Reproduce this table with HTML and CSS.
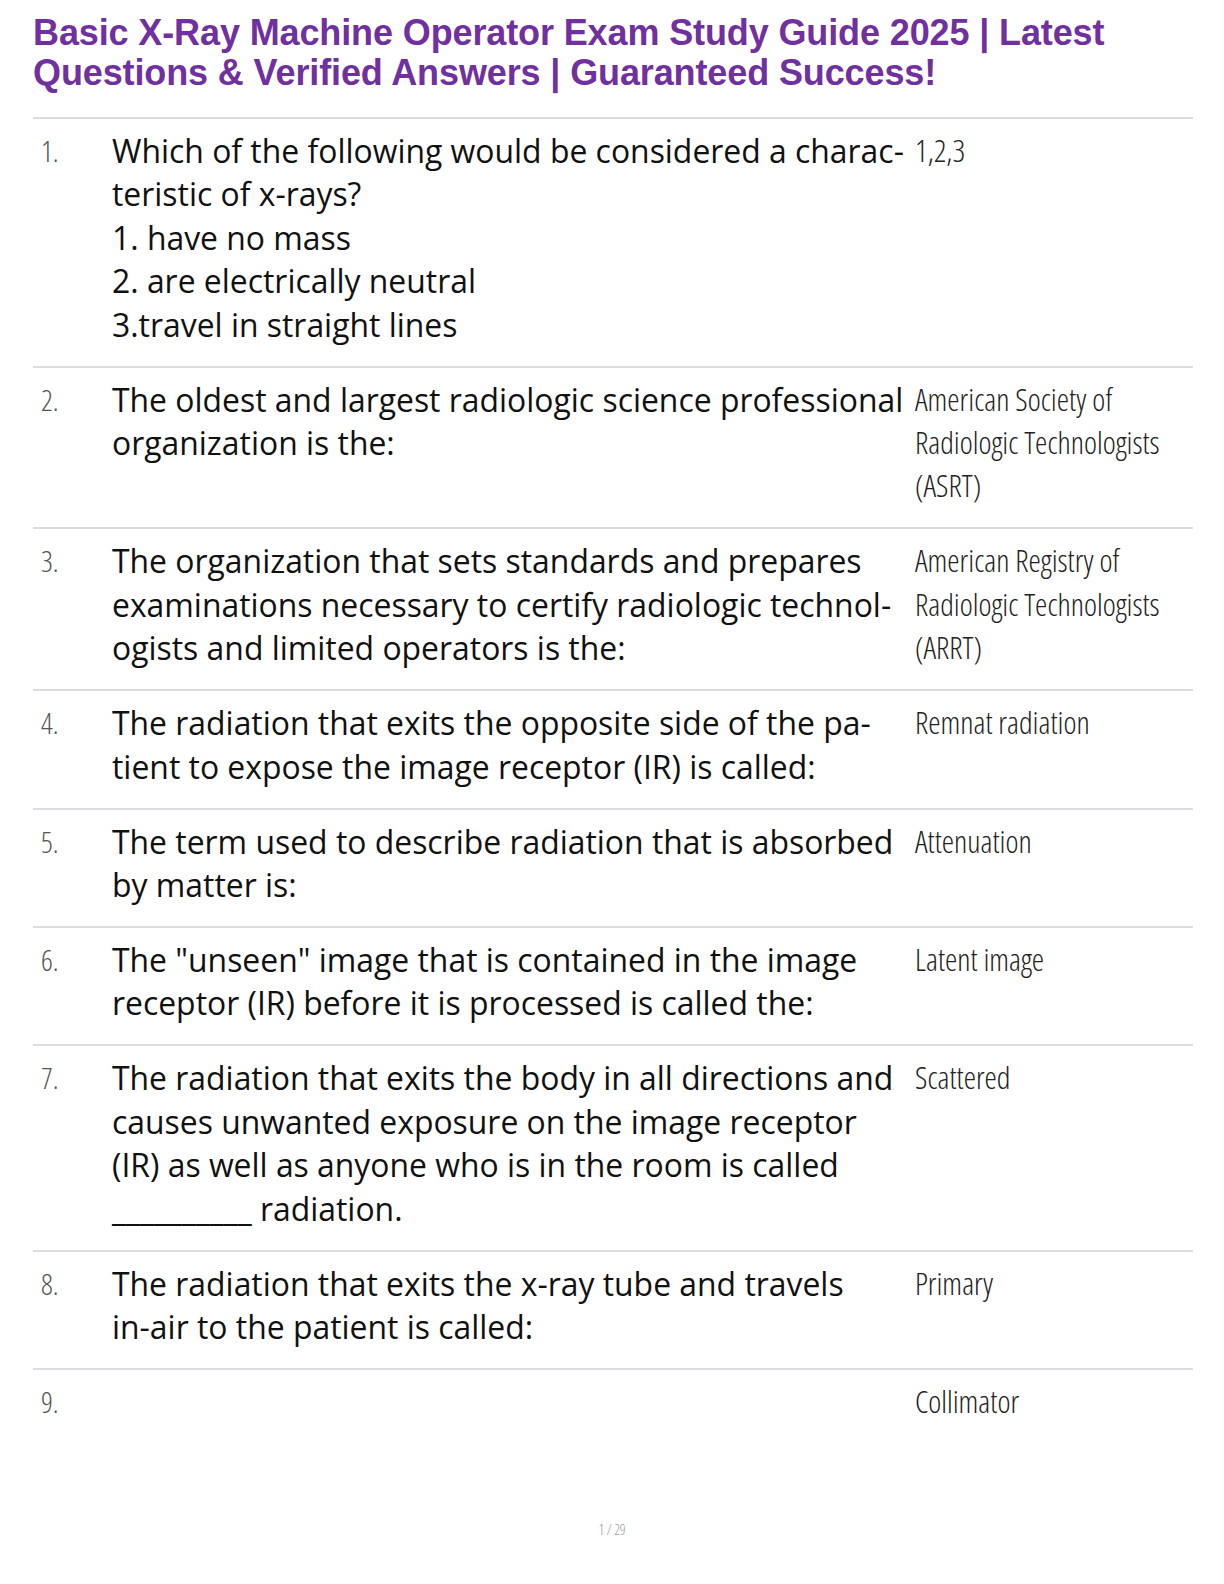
FILE: index.html
```html
<!DOCTYPE html>
<html>
<head>
<meta charset="utf-8">
<link rel="stylesheet" href="styles.css">
</head>
<body>
<div class="page">
  <h1 class="title">Basic X-Ray Machine Operator Exam Study Guide 2025 | Latest Questions &amp; Verified Answers | Guaranteed Success!</h1>
  <div class="list">
    <div class="row">
      <div class="num">1.</div>
      <div class="q">Which of the following would be considered a charac&shy;teristic of <span class="nw">x-rays?</span><br>1. have no mass<br>2. are electrically neutral<br>3.travel in straight lines</div>
      <div class="a">1,2,3</div>
    </div>
    <div class="row">
      <div class="num">2.</div>
      <div class="q">The oldest and largest radiologic science professional organization is the:</div>
      <div class="a">American Society of Radiologic Technologists (ASRT)</div>
    </div>
    <div class="row">
      <div class="num">3.</div>
      <div class="q">The organization that sets standards and prepares examinations necessary to certify radiologic technol&shy;ogists and limited operators is the:</div>
      <div class="a">American Registry of Radiologic Technologists (ARRT)</div>
    </div>
    <div class="row">
      <div class="num">4.</div>
      <div class="q">The radiation that exits the opposite side of the pa&shy;tient to expose the image receptor (IR) is called:</div>
      <div class="a">Remnat radiation</div>
    </div>
    <div class="row">
      <div class="num">5.</div>
      <div class="q">The term used to describe radiation that is absorbed by matter is:</div>
      <div class="a">Attenuation</div>
    </div>
    <div class="row">
      <div class="num">6.</div>
      <div class="q">The "unseen" image that is contained in the image receptor (IR) before it is processed is called the:</div>
      <div class="a">Latent image</div>
    </div>
    <div class="row">
      <div class="num">7.</div>
      <div class="q">The radiation that exits the body in all directions and causes unwanted exposure on the image receptor (IR) as well as anyone who is in the room is called __________ radiation.</div>
      <div class="a">Scattered</div>
    </div>
    <div class="row">
      <div class="num">8.</div>
      <div class="q">The radiation that exits the <span class="nw">x-ray</span> tube and travels <span class="nw">in-air</span> to the patient is called:</div>
      <div class="a">Primary</div>
    </div>
    <div class="row last">
      <div class="num">9.</div>
      <div class="q"></div>
      <div class="a">Collimator</div>
    </div>
  </div>
  <div class="pageno">1 / 29</div>
</div>
</body>
</html>
```
FILE: styles.css
```css
html, body {
  margin: 0;
  padding: 0;
  background: #ffffff;
}
.page {
  width: 1224px;
  height: 1584px;
  box-sizing: border-box;
  padding: 13px 31px 0 33px;
  position: relative;
}
.title {
  margin: 0;
  font-family: "Liberation Sans", Arial, sans-serif;
  font-weight: bold;
  font-size: 36px;
  line-height: 40px;
  color: #7030a0;
  letter-spacing: -0.12px;
}
.list {
  margin-top: 24px;
  border-top: 2px solid #dcdce3;
}
.row {
  display: grid;
  grid-template-columns: 79px 803px 1fr;
  padding: 10px 0 19.6px 0;
  border-bottom: 2px solid #dcdce3;
  line-height: 43.4px;
}
.row.last {
  border-bottom: none;
}
.num {
  padding-left: 8px;
  font-family: "Open Sans", sans-serif;
  font-weight: 300;
  font-stretch: 62.5%;
  color: #555;
  font-size: 29px;
}
.q {
  padding-right: 5px;
  font-family: "Open Sans", "Noto Sans", sans-serif;
  font-size: 31.9px;
  color: #111;
}
.nw {
  white-space: nowrap;
}
.a {
  font-family: "Open Sans", sans-serif;
  font-weight: 300;
  font-stretch: 62.5%;
  color: #222;
  font-size: 31.1px;
}
.pageno {
  position: absolute;
  left: 0;
  right: 0;
  top: 1520px;
  text-align: center;
  font-family: "Open Sans", sans-serif;
  font-weight: 300;
  font-stretch: 62.5%;
  font-size: 14px;
  color: #999;
}
```
